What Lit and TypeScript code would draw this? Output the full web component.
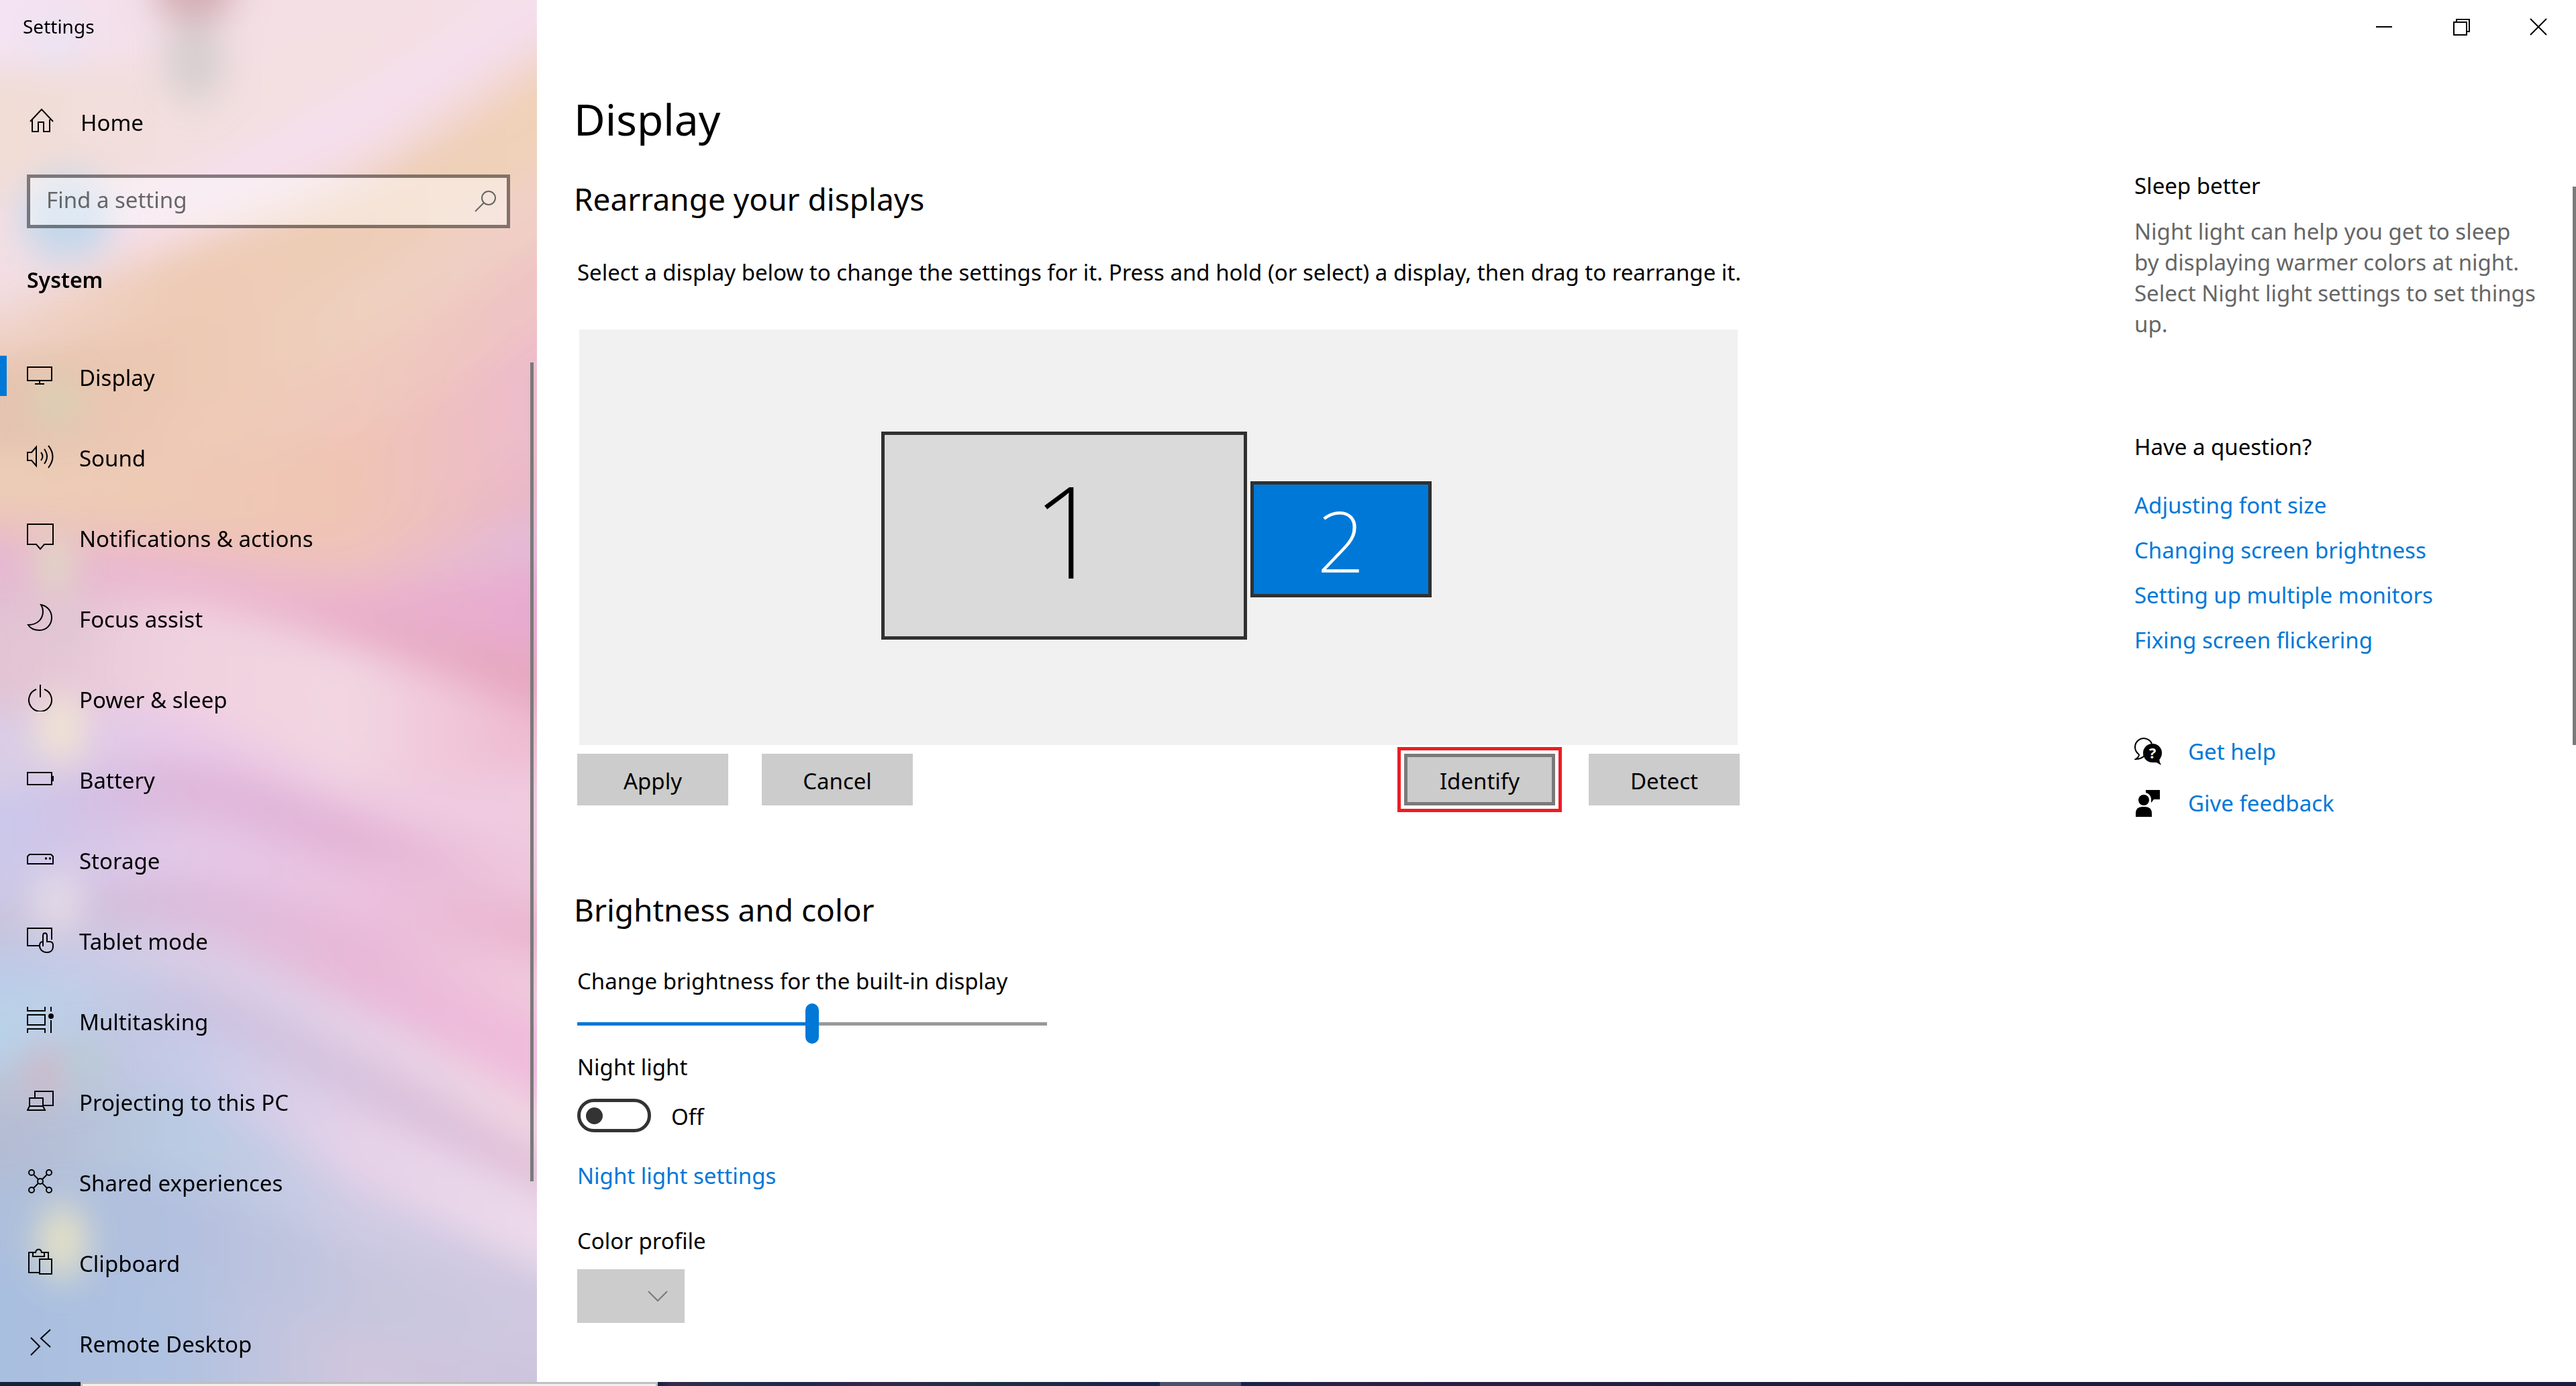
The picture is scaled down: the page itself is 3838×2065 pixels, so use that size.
import { LitElement, html, svg, css, type SVGTemplateResult } from "lit";
import { customElement, state } from "lit/decorators.js";

interface Band {
  y: [number, number, number, number];
  c: [string, string, string, string];
}

/* Soft colour bands behind the sidebar, painted from top to bottom. */
const BANDS: Band[] = [
  { y: [-150, -150, -150, -150], c: ["#f4e3f3", "#f3dfe6", "#f4e0e4", "#f4dcec"] },
  { y: [100, 90, 40, -120], c: ["#f1ddd6", "#f3dfe0", "#f4dfe2", "#f5dfe8"] },
  { y: [290, 260, 130, -10], c: ["#f2dfe4", "#f5dfee", "#f5e0ee", "#f5dfee"] },
  { y: [420, 330, 210, 60], c: ["#f2dce0", "#f5dddf", "#f4dce0", "#f3d8d6"] },
  { y: [465, 370, 270, 110], c: ["#f0d3c8", "#eecbb5", "#edcdb7", "#f0d1b8"] },
  { y: [530, 480, 410, 250], c: ["#e6c4b0", "#ecc9b3", "#efcfbe", "#f0cfc6"] },
  { y: [600, 610, 530, 370], c: ["#e4c3b2", "#eecab6", "#f0c9bc", "#efc4c4"] },
  { y: [670, 680, 640, 500], c: ["#eccdb6", "#eec9b5", "#f0c4b4", "#edbccb"] },
  { y: [750, 790, 790, 680], c: ["#ecc4bc", "#edc0b8", "#efc4ba", "#eab8c6"] },
  { y: [800, 825, 840, 760], c: ["#e6b8d2", "#ecb8d0", "#edbcc4", "#e4bad6"] },
  { y: [860, 860, 875, 850], c: ["#e4bcd2", "#ebb8d0", "#eab2cc", "#e8abd0"] },
  { y: [890, 890, 915, 970], c: ["#e2c0d4", "#eec6d8", "#e9b0ca", "#e6a8c0"] },
  { y: [920, 910, 970, 1060], c: ["#e2c4d4", "#f0d2df", "#f2d5e1", "#efbcd2"] },
  { y: [1060, 1060, 1160, 1150], c: ["#d9cde6", "#e9c9e8", "#eecbe2", "#f0cbe0"] },
  { y: [1180, 1130, 1210, 1270], c: ["#cbc8ea", "#dfb8dc", "#e3b4d6", "#eec6dc"] },
  { y: [1270, 1220, 1290, 1350], c: ["#ccc8e8", "#e3c7e7", "#ebc2e0", "#eab6cf"] },
  { y: [1350, 1315, 1370, 1430], c: ["#c9c4dc", "#dbbadb", "#e8b8d8", "#f0c8dc"] },
  { y: [1395, 1365, 1420, 1520], c: ["#c4c8e2", "#dcc4e0", "#e8b8d8", "#f0bcdc"] },
  { y: [1430, 1405, 1500, 1640], c: ["#bccbe8", "#d8cde6", "#e4d0e6", "#efd5e2"] },
  { y: [1480, 1460, 1570, 1715], c: ["#b9d2e8", "#c9c4e1", "#d8c2de", "#e0bed8"] },
  { y: [1590, 1530, 1650, 1775], c: ["#bcc3d6", "#c5cae8", "#e5d1e8", "#ecd9ea"] },
  { y: [1660, 1630, 1770, 1890], c: ["#b4bcd3", "#b9cbe3", "#cfcbe4", "#cfc8e0"] },
  { y: [1760, 1760, 1860, 1950], c: ["#adbfdd", "#b3c0df", "#c6c6de", "#cfc8e0"] },
  { y: [1880, 1900, 1990, 2020], c: ["#a9bfe0", "#b1c2e1", "#d0c6dd", "#cdc5de"] },
];

/* [cx, cy, rx, ry, colour, opacity] */
const SPOTS: [number, number, number, number, string, number][] = [
  [290, -20, 64, 50, "#cfa6ac", 0.9],
  [290, 90, 46, 60, "#cdc8c8", 0.75],
  [85, 60, 36, 30, "#e2e6f6", 0.7],
  [100, 325, 68, 62, "#bfd6ea", 0.95],
  [85, 600, 34, 30, "#cfdcb8", 0.7],
  [82, 840, 32, 44, "#e0dec2", 0.8],
  [95, 930, 36, 40, "#dcc4d0", 0.6],
  [90, 1085, 38, 48, "#f2e6d0", 0.95],
  [85, 1345, 42, 44, "#e8e0e8", 0.8],
  [65, 1600, 26, 36, "#d8b0bc", 0.7],
  [125, 1590, 28, 38, "#b2d0ce", 0.6],
  [93, 1850, 38, 54, "#e9e4c4", 0.95],
];

const ICONS: Record<string, SVGTemplateResult> = {
  home: svg`<path d="M3 21 20 3l17 18M6 18v18h9V22h8v14h9V18"/>`,
  display: svg`<path d="M1 7h36v20H1zM19 27v4M12 32h14"/>`,
  sound: svg`<path d="M1 14h6l7-8v28l-7-8H1zM21 14q5 6 0 12M26 9q8 11 0 22M32 4q13 16 0 33"/>`,
  notifications: svg`<path d="M1 1h38v30H26l-6 7-6-7H1z"/>`,
  focus: svg`<path d="M21 1c10 2 16 10 16 19 0 11-8 19-18 19-8 0-14-3-17-8 14 0 22-9 22-20 0-4-1-7-3-10z"/>`,
  power: svg`<path d="M20 0v19M14 7A17 17 0 1 0 26 7"/>`,
  battery: svg`<path d="M1 11h36v18H1z"/><path d="M38 16v8" stroke-width="4"/>`,
  storage: svg`<path d="M4 13h32l3 3v11H1V16z"/><path d="M27 19h3M33 19h3" stroke-width="3"/>`,
  tablet: svg`<path d="M18 29H1V3h36v17M24 30V14c0-5 6-5 6 0v9h4c4 0 5 2 5 5v2c0 6-4 9-9 9-6 0-11-4-11-10 0-5 2-6 5-6"/>`,
  multitasking: svg`<path d="M1 0v6h26V0M1 12h26v15H1zM1 39v-6h26v6M36 0v7M36 20v19"/><circle cx="36" cy="14" r="3" fill="currentColor"/>`,
  projecting: svg`<path d="M12 15V6h27v21H25M4 28V16h20v12M4 28h20l3 6H1z"/>`,
  shared: svg`<circle cx="7" cy="7" r="4"/><circle cx="33" cy="7" r="4"/><circle cx="20" cy="20" r="4"/><circle cx="7" cy="33" r="4"/><circle cx="33" cy="33" r="4"/><path d="m10 10 7 7M30 10l-7 7M10 30l7-7M30 30l-7-7"/>`,
  clipboard: svg`<path d="M18 36H3V6h6M25 6h7v10M9 6h4c1-6 8-6 9 0h4v6H9zM19 16h18v22H19z"/>`,
  remote: svg`<path d="m6 13 13 13L6 39M35 1 21 14l14 13"/>`,
};

const NAV: [string, string][] = [
  ["display", "Display"],
  ["sound", "Sound"],
  ["notifications", "Notifications & actions"],
  ["focus", "Focus assist"],
  ["power", "Power & sleep"],
  ["battery", "Battery"],
  ["storage", "Storage"],
  ["tablet", "Tablet mode"],
  ["multitasking", "Multitasking"],
  ["projecting", "Projecting to this PC"],
  ["shared", "Shared experiences"],
  ["clipboard", "Clipboard"],
  ["remote", "Remote Desktop"],
];

const QUESTIONS = [
  "Adjusting font size",
  "Changing screen brightness",
  "Setting up multiple monitors",
  "Fixing screen flickering",
];

const icon = (name: string) => html`
  <svg class="icon" viewBox="0 0 40 40" fill="none" stroke="currentColor" stroke-width="2" aria-hidden="true">
    ${ICONS[name]}
  </svg>
`;

@customElement("side-backdrop")
export class SideBackdrop extends LitElement {
  static styles = css`
    :host { display: block; }
    svg { display: block; width: 100%; height: 100%; }
  `;

  /* Smooth curve through the four heights at x = 0, 267, 533 and 800. */
  private edge([a, b, c, d]: Band["y"]) {
    const p = [2 * a - b, a, b, c, d, 2 * d - c];
    const x = (i: number) => Math.round(((i - 1) * 800) / 3);
    let path = `M${x(0)} ${p[0]}L${x(1)} ${a}`;
    for (let i = 1; i < 4; i++) {
      const s1 = (p[i + 1] - p[i - 1]) / 6;
      const s2 = (p[i + 2] - p[i]) / 6;
      path += `C${x(i) + 89} ${p[i] + s1} ${x(i + 1) - 89} ${p[i + 1] - s2} ${x(i + 1)} ${p[i + 1]}`;
    }
    return `${path}L${x(5)} ${p[5]}V2260H${x(0)}Z`;
  }

  render() {
    return html`
      <svg viewBox="0 0 800 2060" preserveAspectRatio="none" aria-hidden="true">
        <defs>
          <filter id="soft" filterUnits="userSpaceOnUse" x="-120" y="-150" width="1040" height="2400">
            <feGaussianBlur stdDeviation="26" />
          </filter>
          <filter id="glow" filterUnits="userSpaceOnUse" x="-120" y="-150" width="1040" height="2400">
            <feGaussianBlur stdDeviation="24 28" />
          </filter>
          ${BANDS.map((b, i) => svg`
            <linearGradient id=${"g" + i} gradientUnits="userSpaceOnUse" x1="0" y1="0" x2="800" y2="0">
              <stop offset="0.03" stop-color=${b.c[0]} />
              <stop offset="0.34" stop-color=${b.c[1]} />
              <stop offset="0.66" stop-color=${b.c[2]} />
              <stop offset="0.97" stop-color=${b.c[3]} />
            </linearGradient>`)}
        </defs>
        <g filter="url(#soft)">
          ${BANDS.map((b, i) => svg`<path d=${this.edge(b.y)} fill=${`url(#g${i})`} />`)}
        </g>
        <g filter="url(#glow)">
          ${SPOTS.map(([cx, cy, rx, ry, c, o]) => svg`
            <ellipse cx=${cx} cy=${cy} rx=${rx} ry=${ry} fill=${c} opacity=${o} />`)}
        </g>
      </svg>
    `;
  }
}

@customElement("app-root")
export class AppRoot extends LitElement {
  @state() private brightness = 50;
  @state() private nightLight = false;

  static styles = css`
    :host {
      display: flex;
      flex-direction: column;
      height: 100vh;
      overflow: hidden;
      background: #fff;
      color: #000;
      font-family: "Noto Sans", "Open Sans", sans-serif;
      font-size: 33px;
      line-height: 48px;
    }
    * { box-sizing: border-box; }
    button, input, select { font: inherit; color: inherit; margin: 0; border: 0; border-radius: 0; }
    a { color: #0078d7; text-decoration: none; }
    h1, h2, h3, p { margin: 0; padding: 0; font-weight: 400; }
    .icon { flex: none; width: 40px; height: 40px; }

    .window { flex: 1; min-height: 0; display: flex; position: relative; }

    .sidebar {
      flex: none;
      width: 800px;
      position: relative;
      display: flex;
      flex-direction: column;
      overflow: hidden;
    }
    .backdrop { position: absolute; inset: 0; }
    .side-body { position: relative; display: flex; flex-direction: column; }
    .app-title { height: 80px; padding-left: 34px; font-size: 28px; line-height: 78px; }
    .side-link { display: flex; align-items: center; height: 120px; padding-left: 40px; gap: 38px; color: #000; }
    .side-link span { padding-top: 6px; }
    .side-link.home { margin-top: 40px; padding-left: 42px; }
    .search {
      display: flex;
      align-items: center;
      height: 80px;
      margin: 20px 40px 0;
      padding: 0 16px 0 24px;
      border: 5px solid rgba(0, 0, 0, 0.45);
      background: rgba(255, 255, 255, 0.45);
      background-clip: padding-box;
      color: #666;
    }
    .search input { flex: 1; min-width: 0; height: 70px; padding: 0 0 6px; background: none; outline: 0; }
    .search input::placeholder { color: #666; opacity: 1; }
    .search .icon { width: 32px; height: 32px; }
    .section { margin: 53px 40px 59px; font-size: 32px; font-weight: 600; }
    .side-link.current { background: linear-gradient(#0078d7, #0078d7) left center / 10px 60px no-repeat; }
    .thumb { position: absolute; background: #7a7a7a; }
    .thumb.side { right: 5px; top: 540px; width: 5px; height: 1220px; }
    .thumb.main { right: 0; top: 278px; width: 5px; height: 832px; }

    .page { flex: 1; min-width: 0; display: flex; flex-direction: column; padding-left: 60px; }
    .controls { display: flex; justify-content: flex-end; gap: 7px; height: 80px; padding-right: 2px; }
    .controls button { width: 108px; height: 80px; padding: 0; background: none; display: grid; place-items: center; }
    .controls svg { width: 26px; height: 26px; }
    .columns { display: flex; justify-content: space-between; gap: 60px; }
    .content { flex: 0 1 1732px; min-width: 0; display: flex; flex-direction: column; align-items: stretch; }
    h1, h2 { margin-left: -5px; }
    h1 { margin-top: 50px; font-size: 64px; line-height: 96px; }
    h2 { font-size: 46px; line-height: 68px; }
    .h-first { margin-top: 36px; }
    .intro { margin: 52px -40px 0 0; }
    .arrange {
      height: 619px;
      margin: 61px 3px 0;
      background: #f1f1f1;
      display: flex;
      align-items: center;
      justify-content: center;
      gap: 5px;
      padding: 0 6px 6px 0;
    }
    .monitor { border: 5px solid #303030; font-weight: 200; display: grid; place-items: center; }
    .monitor.one { width: 545px; height: 310px; padding: 0 0 18px 12px; background: #dadada; font-size: 190px; line-height: 230px; }
    .monitor.two { width: 270px; height: 173px; margin-top: 12px; padding: 0; background: #0078d7; color: #fff; font-size: 126px; line-height: 150px; }
    .actions { display: flex; gap: 50px; margin-top: 13px; }
    .actions button { width: 225px; height: 77px; padding: 4px 0 0; background: #ccc; }
    .actions .identify {
      margin-left: auto;
      box-shadow: inset 0 0 0 5px #7a7a7a;
      outline: 5px solid #ed1c24;
      outline-offset: 5px;
    }
    .h-second { margin-top: 121px; }
    .label { margin-top: 49px; }
    .slider {
      appearance: none;
      width: 700px;
      height: 60px;
      margin-top: 9px;
      background: linear-gradient(90deg, #0078d7 var(--level), #999 var(--level)) center / 100% 5px no-repeat;
    }
    .slider::-webkit-slider-thumb {
      appearance: none;
      width: 20px;
      height: 60px;
      border-radius: 10px;
      background: #0078d7;
    }
    .night { margin-top: 11px; }
    .toggle-row { display: flex; align-items: center; gap: 30px; height: 50px; margin-top: 23px; }
    .toggle {
      appearance: none;
      display: flex;
      align-items: center;
      width: 110px;
      height: 50px;
      padding: 0 8px;
      border: 5px solid #333;
      border-radius: 25px;
    }
    .toggle::before { content: ""; width: 25px; height: 25px; border-radius: 50%; background: #333; }
    .toggle:checked { background: #0078d7; border-color: #0078d7; justify-content: flex-end; }
    .toggle:checked::before { background: #fff; }
    .toggle-row span { padding-top: 4px; }
    .night-link { align-self: flex-start; margin-top: 41px; }
    .profile { margin-top: 49px; }
    .picker { display: grid; width: 160px; height: 80px; margin-top: 18px; background: #ccc; align-items: center; }
    .picker > * { grid-area: 1 / 1; }
    .picker select { appearance: none; width: 160px; height: 80px; background: none; opacity: 1; }
    .picker svg { justify-self: end; margin-right: 25px; width: 30px; height: 18px; pointer-events: none; }

    .help { flex: 0 1 658px; display: flex; flex-direction: column; padding: 173px 54px 0 0; }
    .help p { margin-top: 21px; color: #666; line-height: 46px; }
    .help h3 { font-size: 33px; }
    .question { margin-top: 136px; }
    .links { display: flex; flex-direction: column; gap: 19px; margin-top: 39px; }
    .support { display: flex; flex-direction: column; gap: 29px; margin-top: 118px; }
    .support a { display: flex; align-items: center; gap: 38px; }
    .support .icon { color: #000; width: 42px; height: 42px; }

    .taskbar {
      flex: none;
      display: flex;
      height: 6px;
      background: linear-gradient(90deg, #13233d 0 980px, #352b4b 1000px, #22304a 1080px, #1d284d 1190px, #34284a 1300px, #1d2f42 1480px, #182449 1660px, #182449 1850px, #2a2145 2000px, #1c1b3c 2900px, #1b2040);
    }
    .task { border: solid #c0c0c0; border-width: 3px 3px 0; background: #f0f0f0; width: 860px; margin-left: 120px; }
    .task-hover { width: 121px; margin-left: 748px; background: #4b506c; }
  `;

  render() {
    return html`
      <div class="window">
        <aside class="sidebar">
          <side-backdrop class="backdrop"></side-backdrop>
          <div class="side-body">
            <div class="app-title">Settings</div>
            <a class="side-link home" href="#home">${icon("home")}<span>Home</span></a>
            <label class="search">
              <input type="text" placeholder="Find a setting" aria-label="Find a setting" />
              <svg class="icon" viewBox="0 0 32 32" fill="none" stroke="currentColor" stroke-width="2" aria-hidden="true">
                <circle cx="21" cy="11" r="10" /><path d="M14 18 1 31" />
              </svg>
            </label>
            <div class="section">System</div>
            <nav>
              ${NAV.map(([id, label], i) => html`
                <a class="side-link ${i === 0 ? "current" : ""}" href="#${id}">${icon(id)}<span>${label}</span></a>`)}
            </nav>
          </div>
          <div class="thumb side"></div>
        </aside>

        <main class="page">
          <div class="controls">
            <button aria-label="Minimize">
              <svg viewBox="0 0 26 26" stroke="#000" stroke-width="2"><path d="M1 13h24" /></svg>
            </button>
            <button aria-label="Restore">
              <svg viewBox="0 0 26 26" fill="none" stroke="#000" stroke-width="2">
                <path d="M2 6h19v19H2zM6 6V2h19v18h-4" />
              </svg>
            </button>
            <button aria-label="Close">
              <svg viewBox="0 0 26 26" stroke="#000" stroke-width="2"><path d="m1 1 24 24M25 1 1 25" /></svg>
            </button>
          </div>
          <div class="columns">
            <div class="content">
              <h1>Display</h1>
              <h2 class="h-first">Rearrange your displays</h2>
              <p class="intro">Select a display below to change the settings for it. Press and hold (or select) a display, then drag to rearrange it.</p>
              <div class="arrange">
                <button class="monitor one">1</button>
                <button class="monitor two">2</button>
              </div>
              <div class="actions">
                <button>Apply</button>
                <button>Cancel</button>
                <button class="identify">Identify</button>
                <button>Detect</button>
              </div>
              <h2 class="h-second">Brightness and color</h2>
              <label class="label" for="brightness">Change brightness for the built-in display</label>
              <input
                id="brightness" class="slider" type="range" min="0" max="100"
                .value=${String(this.brightness)}
                style="--level:${this.brightness}%"
                @input=${(e: Event) => (this.brightness = Number((e.target as HTMLInputElement).value))}
              />
              <label class="night" for="night">Night light</label>
              <div class="toggle-row">
                <input
                  id="night" class="toggle" type="checkbox" role="switch" .checked=${this.nightLight}
                  @change=${(e: Event) => (this.nightLight = (e.target as HTMLInputElement).checked)}
                />
                <span>${this.nightLight ? "On" : "Off"}</span>
              </div>
              <a class="night-link" href="#night-light">Night light settings</a>
              <label class="profile" for="profile">Color profile</label>
              <div class="picker">
                <select id="profile" disabled><option></option></select>
                <svg viewBox="0 0 30 18" fill="none" stroke="#7a7a7a" stroke-width="2" aria-hidden="true"><path d="m1 2 14 14L29 2" /></svg>
              </div>
            </div>

            <aside class="help">
              <h3>Sleep better</h3>
              <p>Night light can help you get to sleep by displaying warmer colors at night. Select Night light settings to set things up.</p>
              <h3 class="question">Have a question?</h3>
              <div class="links">${QUESTIONS.map((q) => html`<a href="#help">${q}</a>`)}</div>
              <div class="support">
                <a href="#get-help">
                  <svg class="icon" viewBox="0 0 42 42" aria-hidden="true">
                    <path d="M7 25A13 13 0 1 1 26 9M7 25q0 4-5 7 8 0 13-5" fill="none" stroke="currentColor" stroke-width="2" />
                    <circle cx="27" cy="23" r="14" fill="currentColor" />
                    <path d="M27 37h6l7 4q-3-5-3-10z" fill="currentColor" />
                    <text x="27" y="31" text-anchor="middle" font-size="22" font-weight="700" fill="#fff">?</text>
                  </svg>
                  Get help
                </a>
                <a href="#feedback">
                  <svg class="icon" viewBox="0 0 42 42" fill="currentColor" aria-hidden="true">
                    <circle cx="14" cy="16" r="8" />
                    <path d="M2 41v-5q0-10 10-10h4q10 0 10 10v5zM17 1h21v14H29l-4 5v-6q-1-7-8-9z" />
                  </svg>
                  Give feedback
                </a>
              </div>
            </aside>
          </div>
        </main>
        <div class="thumb main"></div>
      </div>
      <footer class="taskbar">
        <div class="task"></div>
        <div class="task-hover"></div>
      </footer>
    `;
  }
}
